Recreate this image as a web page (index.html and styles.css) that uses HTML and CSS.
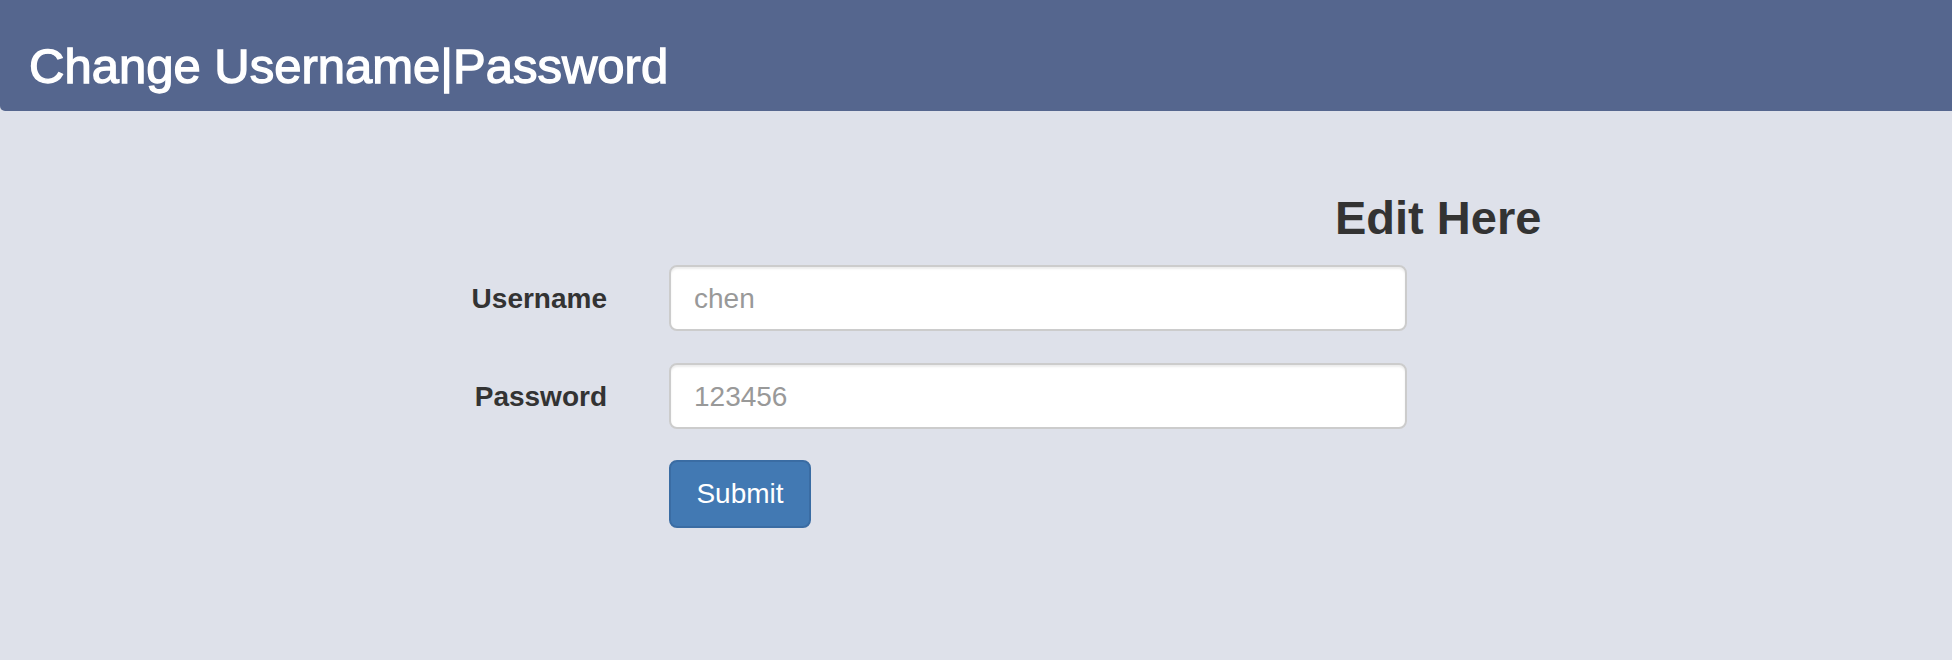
FILE: index.html
```html
<!DOCTYPE html>
<html>
<head>
<meta charset="utf-8">
<link rel="stylesheet" href="styles.css">
</head>
<body>
<header class="topbar">
  <h1 class="title">Change Username|Password</h1>
</header>
<main class="content">
  <h2 class="edit-heading">Edit Here</h2>
  <form class="form">
    <div class="row">
      <label class="label">Username</label>
      <input class="field" type="text" placeholder="chen">
    </div>
    <div class="row">
      <label class="label">Password</label>
      <input class="field" type="text" placeholder="123456">
    </div>
    <div class="row">
      <span class="label"></span>
      <button class="btn" type="button">Submit</button>
    </div>
  </form>
</main>
</body>
</html>
```
FILE: styles.css
```css
html, body {
  margin: 0;
  padding: 0;
}
body {
  background: #dee1ea;
  font-family: "Liberation Sans", Arial, sans-serif;
  color: #333;
  width: 1952px;
  height: 660px;
  overflow: hidden;
}
.topbar {
  height: 111px;
  background: #55668e;
  border-bottom-left-radius: 5px;
  box-sizing: border-box;
  padding: 39px 0 0 29px;
}
.title {
  margin: 0;
  font-size: 49px;
  line-height: 54.7px;
  font-weight: normal;
  color: #fff;
  -webkit-text-stroke: 1.3px #fff;
}
.content {
  display: flex;
  flex-direction: column;
  padding-top: 81px;
}
.edit-heading {
  margin: 0 0 20px 1335px;
  font-size: 47px;
  line-height: 52.5px;
  font-weight: bold;
  color: #333;
}
.form {
  display: flex;
  flex-direction: column;
  gap: 32px;
}
.row {
  display: flex;
  align-items: center;
}
.label {
  width: 669px;
  padding: 2px 62px 0 0;
  box-sizing: border-box;
  text-align: right;
  font-size: 28px;
  font-weight: bold;
  color: #333;
  flex: none;
}
.field {
  width: 738px;
  height: 66px;
  box-sizing: border-box;
  border: 2px solid #ccc;
  border-radius: 8px;
  background: #fff;
  box-shadow: inset 0 2px 2px rgba(0,0,0,0.075);
  padding: 2px 23px 0;
  font-family: "Liberation Sans", Arial, sans-serif;
  font-size: 28px;
  color: #555;
  outline: none;
}
.field::placeholder {
  color: #999;
}
.btn {
  width: 142px;
  height: 68px;
  box-sizing: border-box;
  background: #4279b3;
  border: 2px solid #3a6ca3;
  border-radius: 8px;
  color: #fff;
  font-family: "Liberation Sans", Arial, sans-serif;
  font-size: 28px;
  padding: 0;
  margin-top: -1px;
}
```
